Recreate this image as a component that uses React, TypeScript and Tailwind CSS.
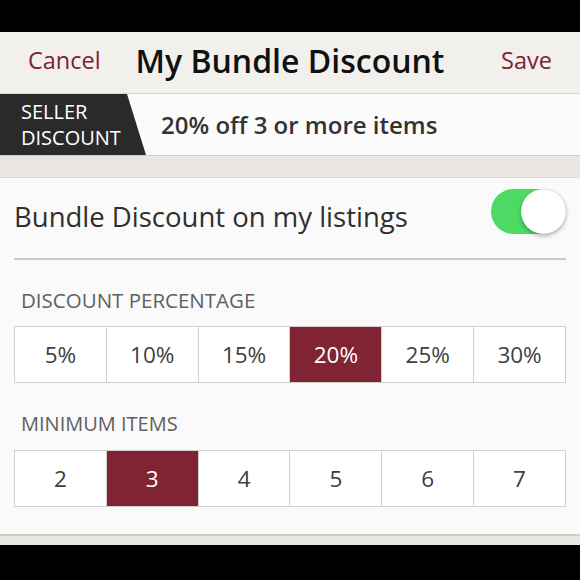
import React from "react";

const font = { fontFamily: "'Open Sans', Lato, sans-serif" };

function Segments({ items, selected }: { items: string[]; selected: number }) {
  return (
    <div className="mx-[14px] flex h-[57px] border border-[#d0d0d0]">
      {items.map((t, i) => (
        <div
          key={t}
          className={
            "flex flex-1 items-center justify-center text-[22.5px] " +
            (i > 0 ? "border-l border-[#d0d0d0] " : "") +
            (i === selected ? "bg-[#802333] text-white" : "bg-white text-[#404040]")
          }
        >
          {t}
        </div>
      ))}
    </div>
  );
}

export default function App() {
  return (
    <div className="flex h-[580px] w-[580px] flex-col bg-black" style={font}>
      <div className="h-[32px] shrink-0 bg-black" />
      <div className="flex h-[62px] shrink-0 items-center border-b border-[#d6d4d0] bg-[#f2f0ed] px-[28px] pb-[3px]">
        <span className="w-[106px] text-[23.5px] text-[#7d2332]">Cancel</span>
        <span className="flex-1 text-center text-[32px] font-semibold text-[#111]">My Bundle Discount</span>
        <span className="w-[106px] text-right text-[23.5px] text-[#7d2332]">Save</span>
      </div>
      <div className="flex h-[62px] shrink-0 items-center border-b border-[#cfcdc9] bg-[#fbfbfb]">
        <div className="flex h-full w-[146px] flex-col justify-center bg-[#2a2a2a] pl-[21px] text-[20px] leading-[26px] text-white [clip-path:polygon(0_0,127px_0,146px_100%,0_100%)]">
          <span>SELLER</span>
          <span>DISCOUNT</span>
        </div>
        <span className="ml-[15px] text-[24px] font-semibold text-[#333333]">20% off 3 or more items</span>
      </div>
      <div className="h-[22px] shrink-0 border-b border-[#dcdad6] bg-[#e9e6e1]" />
      <div className="flex h-[358px] shrink-0 flex-col border-b-2 border-[#cfcdc9] bg-[#fafafa]">
        <div className="mx-[14px] flex h-[82px] shrink-0 items-center justify-between border-b-2 border-[#cccccc] pb-[2px]">
          <span className="text-[27.5px] text-[#2f2f2f]">Bundle Discount on my listings</span>
          <div className="relative mt-[11px] h-[45px] w-[75px] self-start rounded-full bg-[#4cd964]">
            <div className="absolute right-[0px] top-[0px] h-[45px] w-[45px] rounded-full bg-white shadow-[0_2px_4px_rgba(0,0,0,0.3)]" />
          </div>
        </div>
        <div className="mt-[28px] px-[21px] text-[20.5px] leading-[24px] text-[#606060]">DISCOUNT PERCENTAGE</div>
        <div className="mt-[14px]">
          <Segments items={["5%", "10%", "15%", "20%", "25%", "30%"]} selected={3} />
        </div>
        <div className="mt-[29px] px-[21px] text-[20px] leading-[24px] text-[#606060]">MINIMUM ITEMS</div>
        <div className="mt-[14px]">
          <Segments items={["2", "3", "4", "5", "6", "7"]} selected={1} />
        </div>
      </div>
      <div className="h-[9px] shrink-0 bg-[#e9e6e1]" />
      <div className="flex-1 bg-black" />
    </div>
  );
}
